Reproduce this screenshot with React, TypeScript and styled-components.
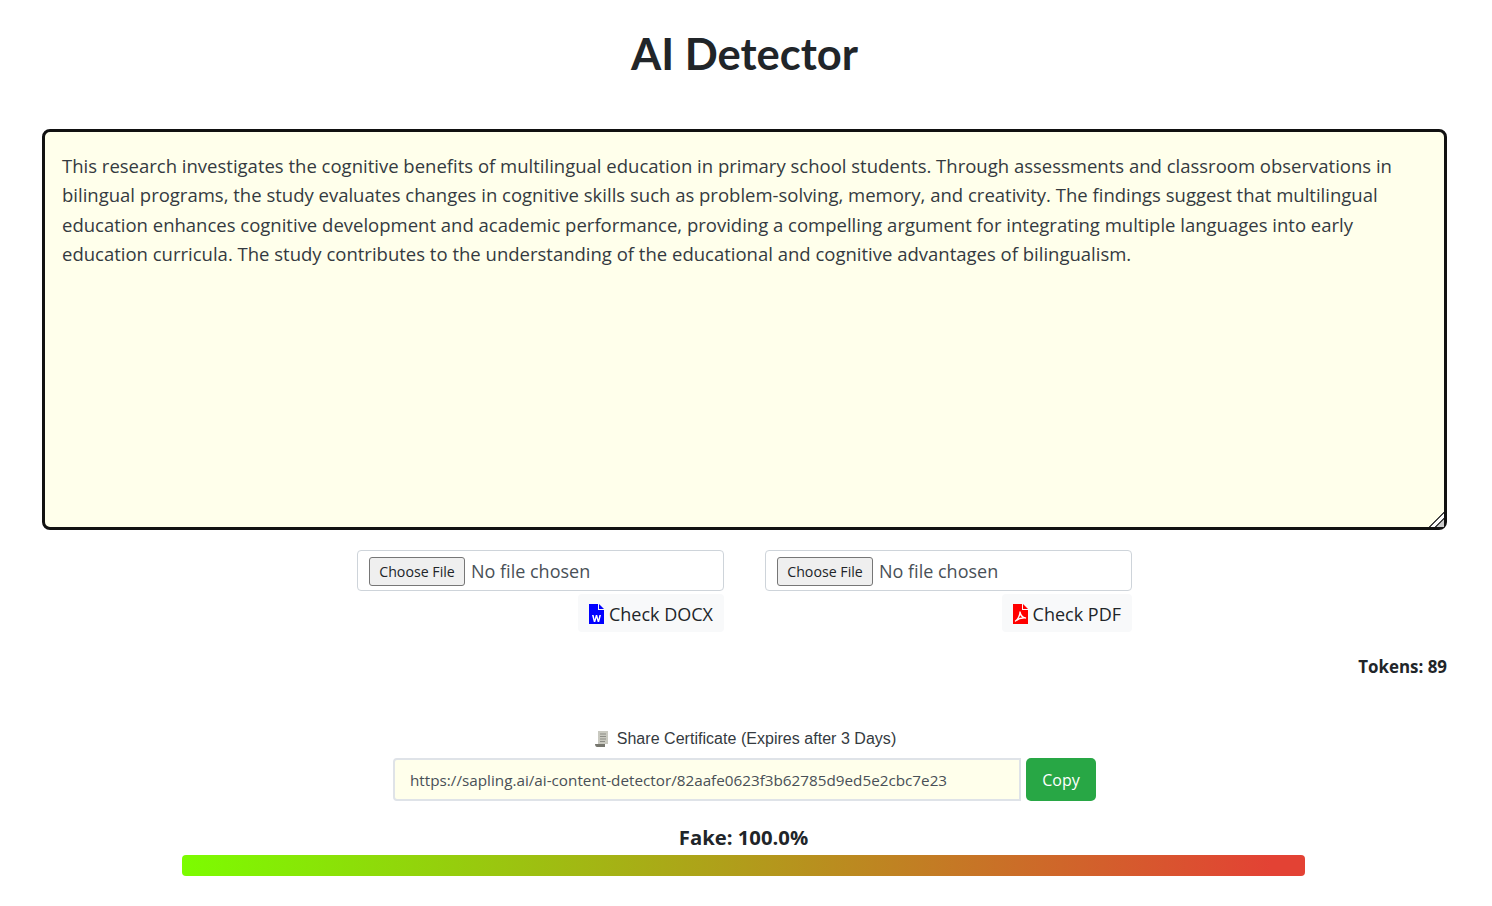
import { FC } from "react";
import styled, { createGlobalStyle } from "styled-components";

const GlobalStyle = createGlobalStyle`
  html, body { margin: 0; padding: 0; background: #fff; }
  body {
    font-family: "Open Sans", "Noto Sans", sans-serif;
    color: #212529;
  }
  * { box-sizing: border-box; }
`;

const Page = styled.main`
  width: 1492px;
  height: 906px;
  overflow: hidden;
  padding: 0 45px 0 42px;
  display: flex;
  flex-direction: column;
  align-items: stretch;
`;

const Title = styled.h1`
  margin: 0;
  height: 129px;
  padding-top: 25px;
  font-family: Lato, sans-serif;
  font-size: 43.5px;
  line-height: 56px;
  font-weight: 700;
  text-align: center;
  color: #212529;
`;

const Editor = styled.textarea`
  display: block;
  width: 100%;
  height: 401px;
  padding: 19px 17px;
  border: 3px solid #111;
  border-radius: 8px;
  background: #ffffeb;
  color: #343a40;
  font-family: "Open Sans", sans-serif;
  font-size: 18.5px;
  line-height: 29.33px;
  white-space: pre;
  overflow: hidden;
  outline: none;

  &::-webkit-resizer {
    background: linear-gradient(
      135deg,
      transparent 0 50%,
      #444 50% 55%,
      #fff 55% 70%,
      #444 70% 75%,
      #ccc 75% 100%
    );
  }
`;

const UploadRow = styled.div`
  display: flex;
  justify-content: center;
  gap: 41px;
  margin-top: 20px;
`;

const UploadColumn = styled.div`
  width: 367px;
  display: flex;
  flex-direction: column;
  align-items: flex-end;
  gap: 3px;
`;

const FileInput = styled.input`
  display: block;
  width: 100%;
  height: 41px;
  padding: 7px 11px;
  border: 1px solid #ced4da;
  border-radius: 4px;
  background: #fff;
  color: #495057;
  font-family: "Open Sans", sans-serif;
  font-size: 18px;
  line-height: 26px;

  &::file-selector-button {
    width: 96px;
    height: 29px;
    margin: 0 6px 0 0;
    padding: 0;
    border: 1px solid #767676;
    border-radius: 3px;
    background: #efefef;
    color: #212529;
    font-family: "Open Sans", sans-serif;
    font-size: 14.2px;
    transform: translateY(-1px);
  }
`;

const CheckButton = styled.button`
  height: 38px;
  display: inline-flex;
  align-items: center;
  gap: 4.5px;
  padding: 1px 11px 0;
  border: 0;
  border-radius: 4px;
  background: #f8f9fa;
  color: #212529;
  font-family: "Open Sans", sans-serif;
  font-size: 18px;
`;

const Tokens = styled.div`
  margin-top: 23px;
  text-align: right;
  font-size: 16.9px;
  line-height: 24px;
  font-weight: 700;
`;

const ShareLabel = styled.div`
  margin-top: 48px;
  padding-left: 2px;
  display: flex;
  justify-content: center;
  align-items: center;
  gap: 8px;
  font-family: "Liberation Sans", Arial, sans-serif;
  font-size: 16px;
  letter-spacing: 0.03px;
  line-height: 24px;
  color: #343a40;
`;

const ShareRow = styled.div`
  display: flex;
  justify-content: center;
  gap: 5px;
  margin-top: 7px;
`;

const ShareInput = styled.input`
  width: 628px;
  height: 43px;
  padding: 0 15px;
  border: 2px solid #dfe3e8;
  border-radius: 4px 0 0 4px;
  background: #ffffeb;
  color: #495057;
  font-family: "Open Sans", sans-serif;
  font-size: 15.25px;
  outline: none;
`;

const CopyButton = styled.button`
  width: 70px;
  height: 43px;
  border: 0;
  border-radius: 5px;
  background: #28a745;
  color: #fff;
  font-family: "Open Sans", sans-serif;
  font-size: 16px;
`;

const ScoreLabel = styled.div`
  margin-top: 23px;
  padding-right: 2px;
  text-align: center;
  font-size: 20.3px;
  line-height: 27px;
  font-weight: 700;
`;

const ScoreBar = styled.div`
  width: 1123px;
  height: 21px;
  margin: 4px 0 0 140px;
  border-radius: 4px;
  background: linear-gradient(to right, #7cfc00, #e34234 97%);
`;

const essay = [
  "This research investigates the cognitive benefits of multilingual education in primary school students. Through assessments and classroom observations in",
  "bilingual programs, the study evaluates changes in cognitive skills such as problem-solving, memory, and creativity. The findings suggest that multilingual",
  "education enhances cognitive development and academic performance, providing a compelling argument for integrating multiple languages into early",
  "education curricula. The study contributes to the understanding of the educational and cognitive advantages of bilingualism.",
].join("\n");

const FileIcon: FC<{ color: string; kind: "word" | "pdf" }> = ({ color, kind }) => (
  <svg width="15" height="20" viewBox="0 0 15 20">
    <path d="M0 0H9V6H15V20H0Z" fill={color} />
    <path d="M10 0L15 5H10Z" fill={color} />
    {kind === "word" ? (
      <path d="M3 11H4.6L5.6 15.4L6.8 11H8.2L9.4 15.4L10.4 11H12L10.2 18H8.7L7.5 13.8L6.3 18H4.8Z" fill="#fff" />
    ) : (
      <path
        d="M2.5 17C5 15.5 7 11 7 8C7.6 11 9.5 13.5 12.5 14C9.5 13.8 5.5 14.5 2.5 17Z"
        fill="none"
        stroke="#fff"
        strokeWidth="1.3"
        strokeLinejoin="round"
      />
    )}
  </svg>
);

const ScrollIcon: FC = () => (
  <svg width="14" height="16" viewBox="0 0 14 16">
    <path d="M3 0H13V13H3Z" fill="#c9c9c0" />
    <path d="M5 3H11M5 5.5H11M5 8H11M5 10.5H10" stroke="#8d8d86" strokeWidth="1" />
    <path d="M0 13H10V16H2C1 16 0 15 0 13Z" fill="#77776f" />
  </svg>
);

export default function App() {
  return (
    <>
      <GlobalStyle />
      <Page>
        <Title>AI Detector</Title>
        <Editor defaultValue={essay} spellCheck={false} />
        <UploadRow>
          <UploadColumn>
            <FileInput type="file" />
            <CheckButton type="button">
              <FileIcon color="#0000ff" kind="word" />
              Check DOCX
            </CheckButton>
          </UploadColumn>
          <UploadColumn>
            <FileInput type="file" />
            <CheckButton type="button">
              <FileIcon color="#ff0000" kind="pdf" />
              Check PDF
            </CheckButton>
          </UploadColumn>
        </UploadRow>
        <Tokens>Tokens: 89</Tokens>
        <ShareLabel>
          <ScrollIcon />
          Share Certificate (Expires after 3 Days)
        </ShareLabel>
        <ShareRow>
          <ShareInput readOnly value="https://sapling.ai/ai-content-detector/82aafe0623f3b62785d9ed5e2cbc7e23" />
          <CopyButton type="button">Copy</CopyButton>
        </ShareRow>
        <ScoreLabel>Fake: 100.0%</ScoreLabel>
        <ScoreBar />
      </Page>
    </>
  );
}
